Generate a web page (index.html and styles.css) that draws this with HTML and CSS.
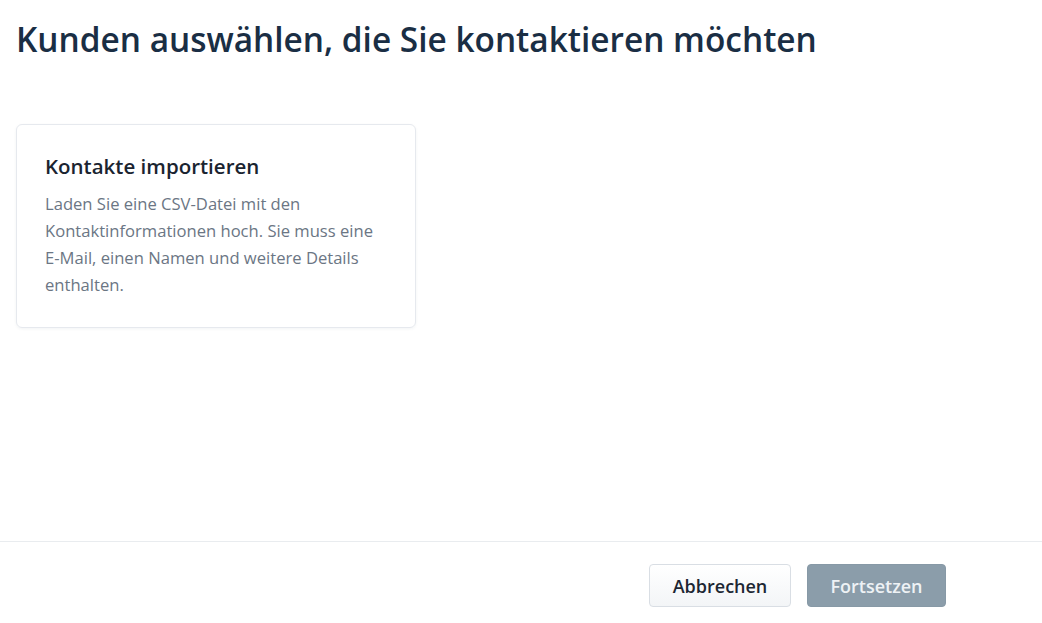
FILE: index.html
```html
<!DOCTYPE html>
<html lang="de">
  <head>
    <meta charset="UTF-8" />
    <meta name="viewport" content="width=device-width, initial-scale=1.0" />
    <title>Kunden auswählen</title>
    <link rel="stylesheet" href="styles.css">
  </head>
  <body>
    <div class="page">
      <main class="content">
        <h1>Kunden auswählen, die Sie kontaktieren möchten</h1>

        <div class="options">
          <div class="option-card">
            <h3>Kontakte importieren</h3>
            <p>Laden Sie eine CSV-Datei mit den Kontaktinformationen hoch. Sie muss eine E-Mail, einen Namen und weitere Details enthalten.</p>
          </div>
        </div>
      </main>

      <footer class="actions">
        <button class="btn btn-secondary">Abbrechen</button>
        <button class="btn btn-primary" disabled>Fortsetzen</button>
      </footer>
    </div>
  </body>
</html>
```

FILE: styles.css
```css
body {
  font-family: "Open Sans", "Noto Sans", sans-serif;
  margin: 0;
  padding: 0;
  background: #fff;
  color: #1a2b3c;
}

.page {
  height: 623px;
  display: flex;
  flex-direction: column;
}

.content {
  flex: 1;
  padding: 0 16px;
}

h1 {
  margin: 17px 0 0;
  font-size: 33.4px;
  font-weight: 600;
  line-height: 44px;
  color: #1a2e44;
}

.options {
  margin-top: 63px;
}

.option-card {
  width: 342px;
  padding: 27px 28px 29px;
  border: 1px solid #e6e9ee;
  border-radius: 6px;
  box-shadow: 0 1px 3px rgba(40, 60, 80, 0.06);
}

.option-card h3 {
  margin: 0 0 10px;
  font-size: 20.5px;
  font-weight: 600;
  line-height: 28px;
  color: #1a2430;
}

.option-card p {
  margin: 0;
  font-size: 16.6px;
  line-height: 27px;
  color: #6b7684;
}

.actions {
  border-top: 1px solid #e9ecef;
  height: 82px;
  box-sizing: border-box;
  display: flex;
  justify-content: flex-end;
  align-items: flex-start;
  gap: 16px;
  padding: 22px 96px 0 0;
}

.btn {
  font-family: inherit;
  font-size: 18px;
  font-weight: 600;
  height: 43px;
  border-radius: 4px;
  padding: 0 16px;
  cursor: pointer;
}

.btn-secondary {
  width: 142px;
  background: linear-gradient(#ffffff, #f3f5f7);
  border: 1px solid #d9dee4;
  color: #1d2733;
}

.btn-primary {
  width: 139px;
  background: #8b9daa;
  border: 1px solid #8799a6;
  color: #eef2f5;
}
```
